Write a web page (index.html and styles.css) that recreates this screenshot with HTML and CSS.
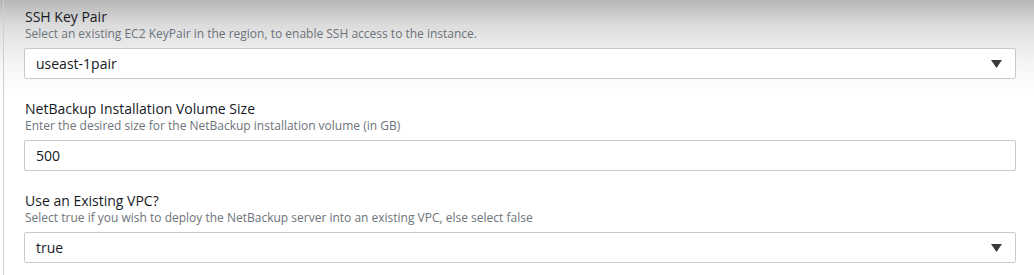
FILE: index.html
```html
<!DOCTYPE html>
<html>
<head>
	<meta http-equiv="Content-Type" content="text/html; charset=UTF-8"/>
	<title>Specify stack details</title>
	<link rel="stylesheet" href="styles.css">
</head>
<body>

<div class="panel">

	<div class="field">
		<p class="field-label">SSH Key Pair</p>
		<p class="field-desc">Select an existing EC2 KeyPair in the region, to enable SSH access to the instance.</p>
		<div class="control select">
			<span>useast-1pair</span>
			<svg class="caret" width="11" height="8" viewBox="0 0 11 8"><polygon points="0,0 11,0 5.5,8"/></svg>
		</div>
	</div>

	<div class="field">
		<p class="field-label">NetBackup Installation Volume Size</p>
		<p class="field-desc">Enter the desired size for the NetBackup installation volume (in GB)</p>
		<input class="control" type="text" value="500">
	</div>

	<div class="field">
		<p class="field-label">Use an Existing VPC?</p>
		<p class="field-desc">Select true if you wish to deploy the NetBackup server into an existing VPC, else select false</p>
		<div class="control select">
			<span>true</span>
			<svg class="caret" width="11" height="8" viewBox="0 0 11 8"><polygon points="0,0 11,0 5.5,8"/></svg>
		</div>
	</div>

</div>

</body>
</html>
```

FILE: styles.css
```css
html {
	height: 100%;
	background: #fff;
	font-family: 'Open Sans', 'Noto Sans', sans-serif;
	color: #16191f;
}

body {
	margin: 0;
	padding: 0;
	min-height: 100%;
	background: linear-gradient(#b6b6b6 0, #dcdcdc 25px, #e8e8e8 42px, #f6f6f6 65px, #fff 95px);
}

/* reset */
p {
	margin: 0;
	padding: 0;
}

/* the grey rule down the left side */
.panel {
	margin-left: 3px;
	padding: 8px 18px 0 21px;
	border-left: 1px solid #cfcfcf;
	min-height: 267px;
}

.field {
	padding-bottom: 21px;
}

/* SSH Key Pair */
.field-label {
	font-size: 14px;
	line-height: 18px;
	color: #16191f;
}

/* Select an existing ... */
.field-desc {
	font-size: 12px;
	line-height: 16px;
	color: #6c737a;
	margin-bottom: 6px;
}

.control {
	box-sizing: border-box;
	display: flex;
	align-items: center;
	width: 100%;
	height: 31px;
	margin: 0 0 0 -1px;
	padding: 0 13px 0 11px;
	border: 1px solid #c9c9c9;
	border-radius: 2px;
	background: #fff;
	font-family: inherit;
	font-size: 14px;
	color: #16191f;
	outline: none;
}

input.control {
	width: calc(100% + 1px);
}

.select {
	width: calc(100% + 1px);
	justify-content: space-between;
}

.caret {
	fill: #3a3a3a;
}
```
